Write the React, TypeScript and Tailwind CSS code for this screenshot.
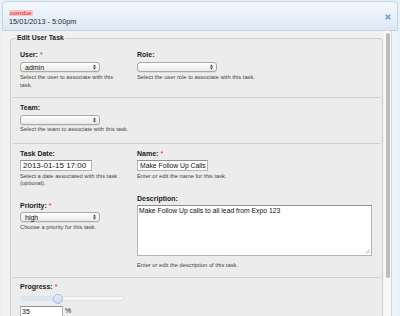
import React from "react";

const Select = ({ value, w = "w-[80px]" }: { value?: string; w?: string }) => (
  <div
    className={`${w} h-[10px] rounded-[3px] border border-[#a9a9a9] bg-gradient-to-b from-white to-[#e9e9e9] flex items-center justify-between pl-[4px] pr-[3px] shadow-[0_1px_0_rgba(0,0,0,0.06)]`}
  >
    <span className="text-[7px] leading-none text-[#111]">{value ?? ""}</span>
    <svg width="3" height="6" viewBox="0 0 3 6">
      <path d="M0 2.4 L1.5 0.4 L3 2.4Z M0 3.6 L1.5 5.6 L3 3.6Z" fill="#333" />
    </svg>
  </div>
);

const Label = ({ text, req }: { text: string; req?: boolean }) => (
  <div className="leading-[10px] text-[7px] font-bold text-[#222]">
    {text}
    {req && <span className="text-[#e0191b] font-normal text-[7px] ml-[2px]">*</span>}
  </div>
);

const Help = ({ children, cls = "mt-[2px]" }: { children: React.ReactNode; cls?: string }) => (
  <div className={`${cls} text-[5.75px] leading-[7.5px] text-[#444]`}>{children}</div>
);

export default function App() {
  return (
    <div className="w-[400px] h-[316px] overflow-hidden bg-[#e7eff7] font-['Liberation_Sans',Arial,sans-serif] flex flex-col">
      {/* header */}
      <div className="mx-[2px] mt-[1px] h-[30px] shrink-0 rounded-t-[4px] border border-[#c2d3e4] bg-gradient-to-b from-[#f3f8fd] to-[#dde9f5] flex justify-between pl-[6px] pr-[6px]">
        <div className="flex flex-col items-start">
          <div className="mt-[7.5px] px-[1px] bg-[#f8c6c6] text-[#e3191b] text-[6px] leading-[6px]">overdue</div>
          <div className="mt-[1px] text-[7.3px] leading-[9px] text-[#2a2a2a]">15/01/2013 - 5:00pm</div>
        </div>
        <svg className="mt-[11.5px]" width="6" height="6" viewBox="0 0 6 6">
          <path d="M0.8 0.8 L5.2 5.2 M5.2 0.8 L0.8 5.2" stroke="#6a9ed6" strokeWidth="1.6" />
        </svg>
      </div>

      {/* body */}
      <div className="flex flex-1 min-h-0 mx-[2px]">
        <div className="flex-1 bg-[#f1f1f1] pl-[8px] pr-[1px] overflow-hidden">
          <fieldset className="mt-[2px] border border-[#cecece] rounded-[4px] bg-[#ececec] p-0">
            <legend className="ml-[5px] px-[1px] text-[6.8px] leading-[10px] font-bold text-[#222]">Edit User Task</legend>

            {/* row 1 */}
            <div className="mx-[2px] border-b border-[#cfcfcf] pt-[7px] pb-[8px] pl-[7px] grid grid-cols-[117px_1fr]">
              <div>
                <Label text="User:" req />
                <div className="mt-[2px]"><Select value="admin" /></div>
                <Help>Select the user to associate with this<br />task.</Help>
              </div>
              <div>
                <Label text="Role:" />
                <div className="mt-[2px]"><Select /></div>
                <Help>Select the user role to associate with this task.</Help>
              </div>
            </div>

            {/* row 2 */}
            <div className="mx-[2px] border-b border-[#cfcfcf] pt-[5px] pb-[9px] pl-[7px]">
              <Label text="Team:" />
              <div className="mt-[2px]"><Select /></div>
              <Help cls="mt-[1px]">Select the team to associate with this task.</Help>
            </div>

            {/* row 3 */}
            <div className="mx-[2px] border-b border-[#cfcfcf] pt-[5px] pb-[8px] pl-[7px] grid grid-cols-[117px_1fr]">
              <div>
                <Label text="Task Date:" />
                <div className="mt-[1px] w-[72px] h-[11px] border border-[#b4b4b4] border-t-[#8f8f8f] bg-white pl-[2px] text-[8px] leading-[9px] text-[#111] overflow-hidden whitespace-nowrap">2013-01-15 17:00</div>
                <Help>Select a date associated with this task<br />(optional).</Help>
                <div className="mt-[13px]"><Label text="Priority:" req /></div>
                <div className="mt-[1.5px]"><Select value="high" /></div>
                <Help>Choose a priority for this task.</Help>
              </div>
              <div>
                <Label text="Name:" req />
                <div className="mt-[1px] w-[71px] h-[11px] border border-[#b4b4b4] border-t-[#8f8f8f] bg-white pl-[2px] text-[6.8px] leading-[9px] text-[#111] overflow-hidden whitespace-nowrap">Make Follow Up Calls</div>
                <Help>Enter or edit the name for this task.</Help>
                <div className="mt-[14px]"><Label text="Description:" /></div>
                <div className="mt-[1px] w-[235px] h-[51px] border border-[#b4b4b4] border-t-[#8f8f8f] bg-white pl-[1px] text-[6.8px] leading-[9px] text-[#111] relative">
                  Make Follow Up calls to all lead from Expo 123
                  <svg className="absolute right-[1px] bottom-[1px]" width="5" height="5" viewBox="0 0 5 5">
                    <path d="M4.5 0.5 L0.5 4.5 M4.5 2.5 L2.5 4.5" stroke="#999" strokeWidth="0.7" />
                  </svg>
                </div>
                <Help cls="mt-[5.5px]">Enter or edit the description of this task.</Help>
              </div>
            </div>

            {/* row 4 */}
            <div className="mx-[2px] pt-[4px] pb-[10px] pl-[7px]">
              <Label text="Progress:" req />
              <div className="mt-[4px] relative w-[104px] h-[5px] rounded-full border border-[#dde3ea] bg-[#f7f7f7] overflow-visible">
                <div className="h-full w-[37px] rounded-l-full bg-[#d9e7f4]" />
                <div className="absolute left-[32px] top-[-3.5px] w-[10px] h-[10px] rounded-full border border-[#9fbcd8] bg-gradient-to-b from-[#e4eef8] to-[#c9dcef]" />
              </div>
              <div className="mt-[4.5px] flex items-start">
                <div className="w-[43px] h-[12px] border border-[#b4b4b4] border-t-[#8f8f8f] bg-white pl-[1px] text-[7px] leading-[10px] text-[#111]">35</div>
                <span className="ml-[2px] text-[7px] leading-[10px] text-[#222]">%</span>
              </div>
            </div>
          </fieldset>
        </div>
        {/* scrollbar */}
        <div className="w-[8px] bg-[#f8f8f8] border-r border-[#d6d6d6] shrink-0">
          <div className="mt-[2px] ml-[2px] w-[4px] h-[245px] rounded-full bg-[#bcbcbc]" />
        </div>
        <div className="w-[6px] bg-[#edf3f9] shrink-0" />
      </div>
    </div>
  );
}
